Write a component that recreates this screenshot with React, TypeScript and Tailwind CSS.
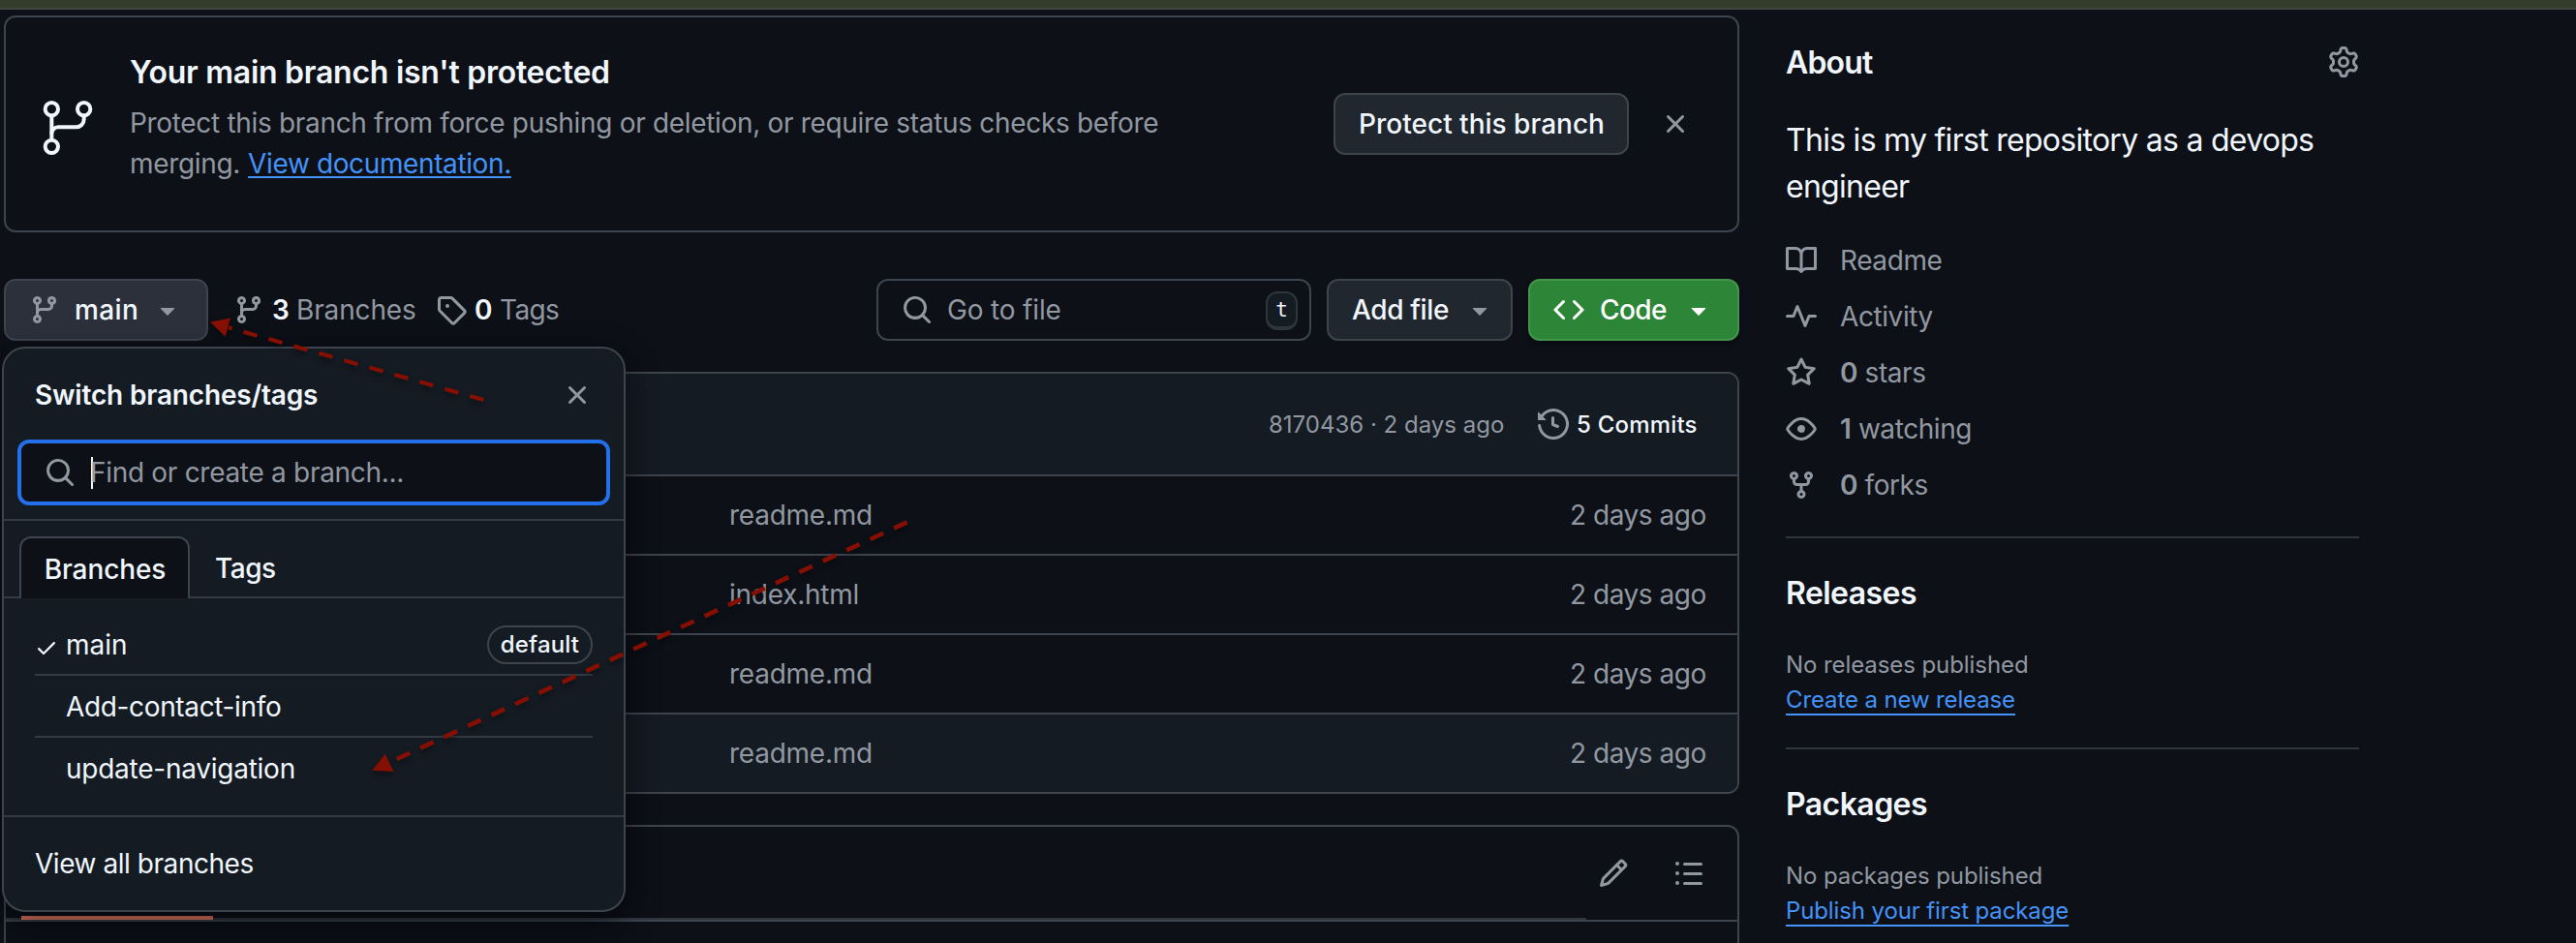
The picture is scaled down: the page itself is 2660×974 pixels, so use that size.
import type { ReactNode } from "react";

const ICONS = {
  branch:
    "M9.5 3.25a2.25 2.25 0 1 1 3 2.122V6A2.5 2.5 0 0 1 10 8.5H6a1 1 0 0 0-1 1v1.128a2.251 2.251 0 1 1-1.5 0V5.372a2.25 2.25 0 1 1 1.5 0v1.836A2.493 2.493 0 0 1 6 7h4a1 1 0 0 0 1-1v-.628A2.25 2.25 0 0 1 9.5 3.25Zm-6 0a.75.75 0 1 0 1.5 0 .75.75 0 0 0-1.5 0Zm8.25-.75a.75.75 0 1 0 0 1.5.75.75 0 0 0 0-1.5ZM4.25 12a.75.75 0 1 0 0 1.5.75.75 0 0 0 0-1.5Z",
  tag: "M1 7.775V2.75C1 1.784 1.784 1 2.75 1h5.025c.464 0 .91.184 1.238.513l6.25 6.25a1.75 1.75 0 0 1 0 2.474l-5.026 5.026a1.75 1.75 0 0 1-2.474 0l-6.25-6.25A1.752 1.752 0 0 1 1 7.775Zm1.5 0c0 .066.026.13.073.177l6.25 6.25a.25.25 0 0 0 .354 0l5.025-5.025a.25.25 0 0 0 0-.354l-6.25-6.25a.25.25 0 0 0-.177-.073H2.75a.25.25 0 0 0-.25.25ZM6 5a1 1 0 1 1 0 2 1 1 0 0 1 0-2Z",
  search:
    "M10.68 11.74a6 6 0 0 1-7.922-8.982 6 6 0 0 1 8.982 7.922l3.04 3.04a.749.749 0 0 1-.326 1.275.749.749 0 0 1-.734-.215ZM11.5 7a4.499 4.499 0 1 0-8.997 0A4.499 4.499 0 0 0 11.5 7Z",
  x: "M3.72 3.72a.75.75 0 0 1 1.06 0L8 6.94l3.22-3.22a.749.749 0 0 1 1.275.326.749.749 0 0 1-.215.734L9.06 8l3.22 3.22a.749.749 0 0 1-.326 1.275.749.749 0 0 1-.734-.215L8 9.06l-3.22 3.22a.751.751 0 0 1-1.042-.018.751.751 0 0 1-.018-1.042L6.94 8 3.72 4.78a.75.75 0 0 1 0-1.06Z",
  triangle:
    "m4.427 7.427 3.396 3.396a.25.25 0 0 0 .354 0l3.396-3.396A.25.25 0 0 0 11.396 7H4.604a.25.25 0 0 0-.177.427Z",
  code: "m11.28 3.22 4.25 4.25a.75.75 0 0 1 0 1.06l-4.25 4.25a.749.749 0 0 1-1.275-.326.749.749 0 0 1 .215-.734L13.94 8l-3.72-3.72a.749.749 0 0 1 .326-1.275.749.749 0 0 1 .734.215Zm-6.56 0a.751.751 0 0 1 1.042.018.751.751 0 0 1 .018 1.042L2.06 8l3.72 3.72a.749.749 0 0 1-.326 1.275.749.749 0 0 1-.734-.215L.47 8.53a.75.75 0 0 1 0-1.06Z",
  history:
    "m.427 1.927 1.215 1.215a8.002 8.002 0 1 1-1.6 5.685.75.75 0 1 1 1.493-.154 6.5 6.5 0 1 0 1.18-4.458l1.358 1.358A.25.25 0 0 1 3.896 6H.25A.25.25 0 0 1 0 5.75V2.104a.25.25 0 0 1 .427-.177ZM7.75 4a.75.75 0 0 1 .75.75v2.992l2.028.812a.75.75 0 0 1-.557 1.392l-2.5-1A.751.751 0 0 1 7 8.25v-3.5A.75.75 0 0 1 7.75 4Z",
  pencil:
    "M11.013 1.427a1.75 1.75 0 0 1 2.474 0l1.086 1.086a1.75 1.75 0 0 1 0 2.474l-8.61 8.61c-.21.21-.47.364-.756.445l-3.251.93a.75.75 0 0 1-.927-.928l.929-3.25c.081-.286.235-.547.445-.758l8.61-8.61Zm.176 4.823L9.75 4.81l-6.286 6.287a.253.253 0 0 0-.064.108l-.558 1.953 1.953-.558a.253.253 0 0 0 .108-.064Zm1.238-3.763a.25.25 0 0 0-.354 0L10.811 3.75l1.439 1.44 1.263-1.263a.25.25 0 0 0 0-.354Z",
  list: "M5.75 2.5h8.5a.75.75 0 0 1 0 1.5h-8.5a.75.75 0 0 1 0-1.5Zm0 5h8.5a.75.75 0 0 1 0 1.5h-8.5a.75.75 0 0 1 0-1.5Zm0 5h8.5a.75.75 0 0 1 0 1.5h-8.5a.75.75 0 0 1 0-1.5ZM2 14a1 1 0 1 1 0-2 1 1 0 0 1 0 2Zm1-6a1 1 0 1 1-2 0 1 1 0 0 1 2 0ZM2 4a1 1 0 1 1 0-2 1 1 0 0 1 0 2Z",
  gear: "M8 0a8.2 8.2 0 0 1 .701.031C9.444.095 9.99.645 10.16 1.29l.288 1.107c.018.066.079.158.212.224.231.114.454.243.668.386.123.082.233.09.299.071l1.103-.303c.644-.176 1.392.021 1.82.63.27.385.506.792.704 1.218.315.675.111 1.422-.364 1.891l-.814.806c-.049.048-.098.147-.088.294.016.257.016.515 0 .772-.01.147.038.246.088.294l.814.806c.475.469.679 1.216.364 1.891a7.977 7.977 0 0 1-.704 1.217c-.428.61-1.176.807-1.82.63l-1.102-.302c-.067-.019-.177-.011-.3.071a5.909 5.909 0 0 1-.668.386c-.133.066-.194.158-.211.224l-.29 1.106c-.168.646-.715 1.196-1.458 1.26a8.006 8.006 0 0 1-1.402 0c-.743-.064-1.289-.614-1.458-1.26l-.289-1.106c-.018-.066-.079-.158-.212-.224a5.738 5.738 0 0 1-.668-.386c-.123-.082-.233-.09-.299-.071l-1.103.303c-.644.176-1.392-.021-1.82-.63a8.12 8.12 0 0 1-.704-1.218c-.315-.675-.111-1.422.363-1.891l.815-.806c.05-.048.098-.147.088-.294a6.214 6.214 0 0 1 0-.772c.01-.147-.038-.246-.088-.294l-.815-.806C.635 6.045.431 5.298.746 4.623a7.92 7.92 0 0 1 .704-1.217c.428-.61 1.176-.807 1.82-.63l1.102.302c.067.019.177.011.3-.071.214-.143.437-.272.668-.386.133-.066.194-.158.211-.224l.29-1.106C6.009.645 6.556.095 7.299.03 7.53.01 7.764 0 8 0Zm-.571 1.525c-.036.003-.108.036-.137.146l-.289 1.105c-.147.561-.549.967-.998 1.189-.173.086-.34.183-.5.29-.417.278-.97.423-1.529.27l-1.103-.303c-.109-.03-.175.016-.195.045-.22.312-.412.644-.573.99-.014.031-.021.11.059.19l.815.806c.411.406.562.957.53 1.456a4.709 4.709 0 0 0 0 .582c.032.499-.119 1.05-.53 1.456l-.815.806c-.081.08-.073.159-.059.19.162.346.353.677.573.989.02.03.085.076.195.046l1.102-.303c.56-.153 1.113-.008 1.53.27.161.107.328.204.501.29.447.222.85.629.997 1.189l.289 1.105c.029.109.101.143.137.146a6.6 6.6 0 0 0 1.142 0c.036-.003.108-.036.137-.146l.289-1.105c.147-.561.549-.967.998-1.189.173-.086.34-.183.5-.29.417-.278.97-.423 1.529-.27l1.103.303c.109.029.175-.016.195-.045.22-.313.411-.644.573-.99.014-.031.021-.11-.059-.19l-.815-.806c-.411-.406-.562-.957-.53-1.456a4.709 4.709 0 0 0 0-.582c-.032-.499.119-1.05.53-1.456l.815-.806c.081-.08.073-.159.059-.19a6.464 6.464 0 0 0-.573-.989c-.02-.03-.085-.076-.195-.046l-1.102.303c-.56.153-1.113.008-1.53-.27a4.44 4.44 0 0 0-.501-.29c-.447-.222-.85-.629-.997-1.189l-.289-1.105c-.029-.11-.101-.143-.137-.146a6.6 6.6 0 0 0-1.142 0ZM11 8a3 3 0 1 1-6 0 3 3 0 0 1 6 0ZM9.5 8a1.5 1.5 0 1 0-3.001.001A1.5 1.5 0 0 0 9.5 8Z",
  book: "M0 1.75A.75.75 0 0 1 .75 1h4.253c1.227 0 2.317.59 3 1.501A3.743 3.743 0 0 1 11.006 1h4.245a.75.75 0 0 1 .75.75v10.5a.75.75 0 0 1-.75.75h-4.507a2.25 2.25 0 0 0-1.591.659l-.622.621a.75.75 0 0 1-1.06 0l-.622-.621A2.25 2.25 0 0 0 5.258 13H.75a.75.75 0 0 1-.75-.75Zm7.251 10.324.004-5.073-.002-2.253A2.25 2.25 0 0 0 5.003 2.5H1.5v9h3.757a3.75 3.75 0 0 1 1.994.574ZM8.755 4.75l-.004 7.322a3.752 3.752 0 0 1 1.992-.572H14.5v-9h-3.495a2.25 2.25 0 0 0-2.25 2.25Z",
  pulse:
    "M6 2c.306 0 .582.187.696.471L10 10.731l1.304-3.26A.751.751 0 0 1 12 7h3.25a.75.75 0 0 1 0 1.5h-2.742l-1.812 4.528a.751.751 0 0 1-1.392 0L6 4.77 4.696 8.03A.75.75 0 0 1 4 8.5H.75a.75.75 0 0 1 0-1.5h2.742l1.812-4.529A.751.751 0 0 1 6 2Z",
  star: "M8 .25a.75.75 0 0 1 .673.418l1.882 3.815 4.21.612a.75.75 0 0 1 .416 1.279l-3.046 2.97.719 4.192a.751.751 0 0 1-1.088.791L8 12.347l-3.766 1.98a.75.75 0 0 1-1.088-.79l.72-4.194L.818 6.374a.75.75 0 0 1 .416-1.28l4.21-.611L7.327.668A.75.75 0 0 1 8 .25Zm0 2.445L6.615 5.5a.75.75 0 0 1-.564.41l-3.097.45 2.24 2.184a.75.75 0 0 1 .216.664l-.528 3.084 2.769-1.456a.75.75 0 0 1 .698 0l2.77 1.456-.53-3.084a.75.75 0 0 1 .216-.664l2.24-2.183-3.096-.45a.75.75 0 0 1-.564-.41L8 2.694Z",
  eye: "M8 2c1.981 0 3.671.992 4.933 2.078 1.27 1.091 2.187 2.345 2.637 3.023a1.62 1.62 0 0 1 0 1.798c-.45.678-1.367 1.932-2.637 3.023C11.67 13.008 9.981 14 8 14c-1.981 0-3.671-.992-4.933-2.078C1.797 10.83.88 9.576.43 8.898a1.62 1.62 0 0 1 0-1.798c.45-.677 1.367-1.931 2.637-3.022C4.33 2.992 6.019 2 8 2ZM1.679 7.932a.12.12 0 0 0 0 .136c.411.622 1.241 1.75 2.366 2.717C5.176 11.758 6.527 12.5 8 12.5c1.473 0 2.825-.742 3.955-1.715 1.124-.967 1.954-2.096 2.366-2.717a.12.12 0 0 0 0-.136c-.412-.621-1.242-1.75-2.366-2.717C10.824 4.242 9.473 3.5 8 3.5c-1.473 0-2.825.742-3.955 1.715-1.124.967-1.954 2.096-2.366 2.717ZM8 10a2 2 0 1 1-.001-3.999A2 2 0 0 1 8 10Z",
  fork: "M5 5.372v.878c0 .414.336.75.75.75h4.5a.75.75 0 0 0 .75-.75v-.878a2.25 2.25 0 1 1 1.5 0v.878a2.25 2.25 0 0 1-2.25 2.25h-1.5v2.128a2.251 2.251 0 1 1-1.5 0V8.5h-1.5A2.25 2.25 0 0 1 3.5 6.25v-.878a2.25 2.25 0 1 1 1.5 0ZM5 3.25a.75.75 0 1 0-1.5 0 .75.75 0 0 0 1.5 0Zm6.75.75a.75.75 0 1 0 0-1.5.75.75 0 0 0 0 1.5Zm-3 8.75a.75.75 0 1 0-1.5 0 .75.75 0 0 0 1.5 0Z",
  check:
    "M13.78 4.22a.75.75 0 0 1 0 1.06l-7.25 7.25a.75.75 0 0 1-1.06 0L2.22 9.28a.751.751 0 0 1 .018-1.042.751.751 0 0 1 1.042-.018L6 10.94l6.72-6.72a.75.75 0 0 1 1.06 0Z",
};

function Icon({ name, className = "" }: { name: keyof typeof ICONS; className?: string }) {
  return (
    <svg
      viewBox="0 0 16 16"
      width="32"
      height="32"
      fill="currentColor"
      className={`shrink-0 ${className}`}
      aria-hidden="true"
    >
      <path d={ICONS[name]} />
    </svg>
  );
}

function LargeBranchIcon() {
  return (
    <svg viewBox="0 0 24 24" width="64" height="64" fill="currentColor" className="mt-[82px] shrink-0">
      <path d="M15 4.75a3.25 3.25 0 1 1 6.5 0 3.25 3.25 0 0 1-6.5 0ZM2.5 19.25a3.25 3.25 0 1 1 6.5 0 3.25 3.25 0 0 1-6.5 0Zm0-14.5a3.25 3.25 0 1 1 6.5 0 3.25 3.25 0 0 1-6.5 0ZM5.75 6.5a1.75 1.75 0 1 0-.001-3.501A1.75 1.75 0 0 0 5.75 6.5Zm0 14.5a1.75 1.75 0 1 0-.001-3.501A1.75 1.75 0 0 0 5.75 21Zm12.5-14.5a1.75 1.75 0 1 0-.001-3.501A1.75 1.75 0 0 0 18.25 6.5Z" />
      <path d="M5.75 16.75A.75.75 0 0 1 5 16V8a.75.75 0 0 1 1.5 0v8a.75.75 0 0 1-.75.75Z" />
      <path d="M17.5 8.75v-1H19v1a3.75 3.75 0 0 1-3.75 3.75h-7a1.75 1.75 0 0 0-1.75 1.75H5A3.25 3.25 0 0 1 8.25 11h7a2.25 2.25 0 0 0 2.25-2.25Z" />
    </svg>
  );
}

function Banner() {
  return (
    <section className="mt-1.5 flex h-[224px] items-start rounded-xl border-2 border-[#3d444d] pr-12 pl-8">
      <LargeBranchIcon />
      <div className="ml-8 w-[1100px] pt-[33px] whitespace-nowrap">
        <h3 className="text-[32px] leading-[48px] font-semibold tracking-[-0.26px]">
          Your main branch isn't protected
        </h3>
        <p className="mt-[7px] text-[28px] leading-[42px] tracking-[-0.32px] text-[#9198a1]">
          <span className="block">
            Protect this branch from force pushing or deletion, or require status checks before
          </span>
          <span className="flex gap-2">
            <span>merging.</span>
            <a className="tracking-[-0.38px] text-[#4493f8] underline decoration-2 underline-offset-[3px]">
              View documentation.
            </a>
          </span>
        </p>
      </div>
      <button className="mt-[78px] ml-auto h-16 w-[305px] rounded-xl border-2 border-[#3d444d] bg-[#21272f] pl-px text-[28px] font-medium">
        Protect this branch
      </button>
      <Icon name="x" className="mt-[94px] ml-8 text-[#9198a1]" />
    </section>
  );
}

function Toolbar() {
  return (
    <div className="mt-12 flex h-16 items-center text-[28px] whitespace-nowrap">
      <button className="flex h-16 w-[211px] items-center rounded-xl border-2 border-[#3d444d] bg-[#2b303b] px-6 font-medium tracking-[0.39px]">
        <Icon name="branch" className="text-[#9198a1]" />
        <span className="ml-[15px]">main</span>
        <Icon name="triangle" className="ml-auto text-[#9198a1]" />
      </button>
      <a className="ml-[26px] flex w-[209px] items-center text-[#9198a1]">
        <Icon name="branch" />
        <strong className="ml-2 w-[25px] font-semibold text-[#f0f6fc]">3</strong>
        <span className="tracking-[-0.14px]">Branches</span>
      </a>
      <a className="flex items-center text-[#9198a1]">
        <Icon name="tag" />
        <strong className="ml-2 w-[26px] font-semibold text-[#f0f6fc]">0</strong>
        <span className="tracking-[-0.64px]">Tags</span>
      </a>
      <div className="ml-auto flex gap-4">
        <div className="flex h-16 w-[449px] items-center rounded-xl border-2 border-[#3d444d] pr-3 pl-6 text-[#9198a1]">
          <Icon name="search" />
          <span className="ml-[15px] tracking-[-0.17px]">Go to file</span>
          <kbd className="mt-0.5 ml-auto flex h-10 w-[33px] items-center justify-center rounded-xl border-2 border-b-4 border-[#2f353d] bg-[#151b23] font-['DejaVu_Sans_Mono',monospace] text-[21px] leading-none text-[#f0f6fc]">
            t
          </kbd>
        </div>
        <button className="flex h-16 w-[192px] items-center rounded-xl border-2 border-[#3d444d] bg-[#21272f] pr-4 pl-6 font-medium tracking-[-0.36px]">
          Add file
          <Icon name="triangle" className="ml-auto text-[#9198a1]" />
        </button>
        <button className="flex h-16 w-[218px] items-center rounded-xl border-2 border-[#43954c] bg-[#2d8637] px-6 font-medium tracking-[-0.59px] text-white shadow-[0_2px_4px_rgba(1,4,9,0.5)]">
          <Icon name="code" />
          <span className="ml-4">Code</span>
          <Icon name="triangle" className="ml-auto" />
        </button>
      </div>
    </div>
  );
}

const FILES = ["readme.md", "index.html", "readme.md", "readme.md"];

function FileTable() {
  return (
    <section className="mt-8 overflow-hidden rounded-xl border-2 border-[#3d444d]">
      <header className="flex h-[104px] items-center justify-end bg-[#151b23] pr-[42px] text-[24px] whitespace-nowrap text-[#9198a1]">
        <span className="w-[243px] pt-px">8170436 · 2 days ago</span>
        <Icon name="history" className="ml-[35px]" />
        <span className="ml-2 w-[124px] pt-px font-medium tracking-[0.2px] text-[#f0f6fc]">5 Commits</span>
      </header>
      {FILES.map((name, i) => (
        <div
          key={i}
          className="flex h-[82px] items-center justify-between border-t-2 border-[#3d444d] pr-8 pl-[747px] text-[28px] tracking-[-0.25px] text-[#9198a1] last:bg-[#151b23]"
        >
          <span>{name}</span>
          <span className="w-[141px] tracking-[-0.47px] whitespace-nowrap">2 days ago</span>
        </div>
      ))}
    </section>
  );
}

function ReadmePanel() {
  return (
    <section className="mt-8 h-[140px] rounded-t-xl border-2 border-[#3d444d]">
      <div className="flex h-[98px] items-start border-b-2 border-[#3d444d] pr-[34px]">
        <div className="relative h-24 w-[1632px] border-b-2 border-[#2f353d]">
          <div className="absolute -bottom-0.5 left-4 h-1 w-[198px] bg-[#f78166]" />
        </div>
        <Icon name="pencil" className="mt-8 ml-3 text-[#9198a1]" />
        <Icon name="list" className="mt-8 ml-auto text-[#9198a1]" />
      </div>
    </section>
  );
}

function StatRow({ icon, children }: { icon: keyof typeof ICONS; children: ReactNode }) {
  return (
    <li className="flex h-[58px] items-center gap-6">
      <Icon name={icon} />
      <span>{children}</span>
    </li>
  );
}

function SideSection({ title, note, link }: { title: string; note: string; link: string }) {
  return (
    <section className="border-t-2 border-[#2f353d] pt-[33px] pb-[31px]">
      <h2 className="text-[32px] leading-[48px] font-semibold tracking-[-0.56px]">{title}</h2>
      <p className="mt-8 text-[24px] leading-[36px] tracking-[-0.08px] text-[#9198a1]">{note}</p>
      <p className="text-[24px] leading-[36px] tracking-[-0.12px]">
        <a className="text-[#4493f8] underline decoration-2 underline-offset-[6px] [text-decoration-skip-ink:none]">
          {link}
        </a>
      </p>
    </section>
  );
}

function Sidebar() {
  return (
    <aside className="ml-12 w-[592px] shrink-0 pt-[30px]">
      <div className="flex h-12 items-center justify-between">
        <h2 className="pt-0.5 text-[32px] leading-[48px] font-semibold tracking-[-0.83px]">About</h2>
        <Icon name="gear" className="text-[#9198a1]" />
      </div>
      <p className="mt-[33px] text-[32px] leading-[48px] tracking-[-0.72px]">
        This is my first repository as a devops engineer
      </p>
      <ul className="mt-[23px] mb-6 text-[28px] tracking-[-0.42px] text-[#9198a1]">
        <StatRow icon="book">Readme</StatRow>
        <StatRow icon="pulse">Activity</StatRow>
        <StatRow icon="star">
          <strong className="font-semibold">0</strong> stars
        </StatRow>
        <StatRow icon="eye">
          <strong className="font-semibold">1</strong> watching
        </StatRow>
        <StatRow icon="fork">
          <strong className="font-semibold">0</strong> forks
        </StatRow>
      </ul>
      <SideSection title="Releases" note="No releases published" link="Create a new release" />
      <SideSection title="Packages" note="No packages published" link="Publish your first package" />
    </aside>
  );
}

function BranchMenu() {
  return (
    <div className="absolute top-[358px] left-[2px] h-[584px] w-[644px] rounded-3xl border-2 border-[#3d444d] bg-[#151b23] text-[28px] shadow-[0_12px_24px_-6px_rgba(1,4,9,0.4),0_12px_36px_0_rgba(1,4,9,0.4)]">
      <div className="flex h-[94px] items-center justify-between px-8 pt-0.5">
        <h4 className="font-semibold tracking-[-0.17px]">Switch branches/tags</h4>
        <Icon name="x" className="text-[#9198a1]" />
      </div>
      <div className="mx-3.5 flex h-[68px] items-center rounded-xl border-4 border-[#2470eb] bg-[#0d1017] pl-6 text-[#9198a1]">
        <Icon name="search" />
        <span className="ml-4 h-[33px] w-0.5 bg-[#f0f6fc]" />
        <span className="-ml-[3px] tracking-[-0.3px]">Find or create a branch...</span>
      </div>
      <div className="mt-3.5 flex border-y-2 border-[#343a43] pt-4 pl-4 font-medium">
        <div className="-mb-0.5 flex h-16 w-44 items-center justify-center rounded-t-xl border-2 border-b-0 border-[#3d444d] bg-[#0d1017] pt-px pl-px tracking-[-0.1px]">
          Branches
        </div>
        <div className="ml-[26px] flex h-[62px] items-center pt-[3px] tracking-[-0.49px]">Tags</div>
      </div>
      <ul className="mx-8 pt-4 pb-4 whitespace-nowrap">
        <li className="flex h-16 items-center border-b-2 border-[#343a43]">
          <Icon name="check" className="mt-2 h-6 w-6" />
          <span className="ml-2 pt-0.5">main</span>
          <span className="mt-0.5 ml-auto flex h-10 w-[109px] items-center justify-center rounded-full border-2 border-[#3d444d] text-[24px] leading-none font-medium tracking-[0.15px]">
            default
          </span>
        </li>
        <li className="flex h-16 items-center border-b-2 border-[#343a43] pt-0.5 pl-8 tracking-[-0.35px]">
          Add-contact-info
        </li>
        <li className="flex h-16 items-center pl-8 tracking-[-0.25px]">update-navigation</li>
      </ul>
      <div className="flex h-[98px] items-center border-t-2 border-[#343a43] pl-8 tracking-[-0.45px]">
        View all branches
      </div>
    </div>
  );
}

function Arrows() {
  return (
    <svg
      width="960"
      height="500"
      viewBox="0 320 960 500"
      className="absolute top-[320px] left-0 drop-shadow-[0_3px_3px_rgba(0,0,0,0.45)]"
      fill="#850f03"
      stroke="#850f03"
    >
      <path d="M499.3 413 236 338.3" fill="none" strokeWidth="4.2" strokeDasharray="14.6 12.4" />
      <path d="M217 332.5 237.9 328.5 232.7 347.8Z" stroke="none" strokeWidth="0" />
      <path d="M936.5 539.4 402 787.6" fill="none" strokeWidth="4.6" strokeDasharray="14.8 12.15" />
      <path d="M384.3 795.8 397.7 778.8 406.6 797Z" stroke="none" strokeWidth="0" />
    </svg>
  );
}

export default function App() {
  return (
    <div className="relative h-[974px] w-[2660px] overflow-hidden bg-[#0d1017] font-[Inter,sans-serif] text-[#f0f6fc]">
      <div className="h-2.5 border-b-2 border-[#44473f] bg-[#343d2c]" />
      <div className="flex">
        <main className="ml-1 w-[1792px] shrink-0">
          <Banner />
          <Toolbar />
          <FileTable />
          <ReadmePanel />
        </main>
        <Sidebar />
      </div>
      <BranchMenu />
      <Arrows />
    </div>
  );
}
